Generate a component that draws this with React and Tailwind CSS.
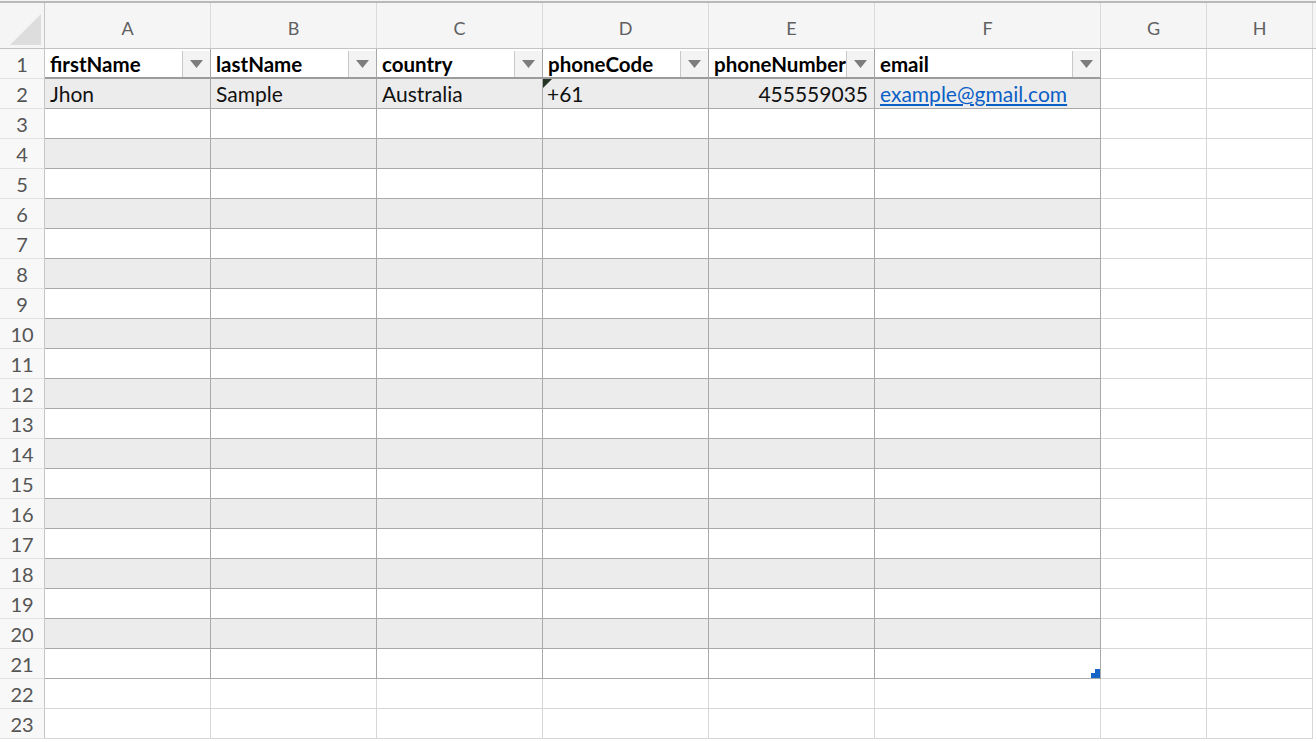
import React from "react";

const columns = [
  { letter: "A", width: "w-[166px]", key: "firstName" },
  { letter: "B", width: "w-[166px]", key: "lastName" },
  { letter: "C", width: "w-[166px]", key: "country" },
  { letter: "D", width: "w-[166px]", key: "phoneCode" },
  { letter: "E", width: "w-[166px]", key: "phoneNumber" },
  { letter: "F", width: "w-[226px]", key: "email" },
  { letter: "G", width: "w-[106px]", key: null },
  { letter: "H", width: "w-[106px]", key: null },
];

const record = {
  firstName: "Jhon",
  lastName: "Sample",
  country: "Australia",
  phoneCode: "+61",
  phoneNumber: "455559035",
  email: "example@gmail.com",
};

const TABLE_COLS = 6;
const TABLE_ROWS = 21;

function FilterButton() {
  return (
    <div className="absolute right-0 top-[2px] bottom-0 w-[28px] bg-[#f3f3f3] border-l border-[#c9c9c9] flex items-center justify-center">
      <svg width="13" height="8" viewBox="0 0 13 8">
        <path d="M0 0 H13 L6.5 8 Z" fill="#7d7d7d" />
      </svg>
    </div>
  );
}

function Cell({ col, colIndex, row }) {
  const inTable = colIndex < TABLE_COLS && row <= TABLE_ROWS;
  const banded = inTable && row > 1 && row % 2 === 0;
  const border = inTable ? "border-[#a9a9a9]" : "border-[#d6d6d6]";
  const bottom = row === 1 && inTable ? "border-b-2 border-b-[#9c9c9c]" : "border-b";

  let content = null;
  if (inTable && row === 1) {
    content = (
      <>
        <span className="font-bold text-black pl-[5px] pt-[2px] whitespace-nowrap text-[20.5px]">
          {col.key}
        </span>
        <FilterButton />
      </>
    );
  } else if (inTable && row === 2) {
    if (col.key === "phoneNumber") {
      content = (
        <span className="ml-auto pr-[6px] text-[#111]">{record.phoneNumber}</span>
      );
    } else if (col.key === "email") {
      content = (
        <span className="pl-[5px] text-[#0a5fc6] underline underline-offset-2">
          {record.email}
        </span>
      );
    } else if (col.key === "phoneCode") {
      content = (
        <>
          <svg className="absolute left-0 top-0" width="9" height="9" viewBox="0 0 9 9">
            <path d="M0 0 H9 L0 9 Z" fill="#263526" />
          </svg>
          <span className="pl-[4px] text-[#111]">{record.phoneCode}</span>
        </>
      );
    } else {
      content = <span className="pl-[5px] text-[#111]">{record[col.key]}</span>;
    }
  } else if (inTable && row === TABLE_ROWS && colIndex === TABLE_COLS - 1) {
    content = (
      <svg className="absolute right-0 bottom-0" width="9" height="9" viewBox="0 0 9 9">
        <path d="M4 0 H9 V9 H0 V4 H4 Z" fill="#1565c9" />
      </svg>
    );
  }

  return (
    <div
      className={`${col.width} h-[30px] shrink-0 relative flex items-center overflow-hidden border-r ${bottom} ${border} ${
        banded ? "bg-[#ececec]" : "bg-white"
      }`}
    >
      {content}
    </div>
  );
}

export default function App() {
  const rows = Array.from({ length: 23 }, (_, i) => i + 1);

  return (
    <div className="w-[1316px] h-[742px] overflow-hidden bg-white font-['Lato',sans-serif] text-[21px] leading-none">
      <div className="h-px bg-[#f4f4f4]" />
      <div className="h-[2px] bg-[#b9b9b9]" />

      <div className="flex h-[46px] bg-[#f5f5f5] border-b border-[#c3c3c3]">
        <div className="w-[45px] shrink-0 border-r border-[#c6c6c6] relative">
          <svg className="absolute left-[10px] top-[11px]" width="31" height="31" viewBox="0 0 31 31">
            <path d="M31 0 V31 H0 Z" fill="#dddddd" />
          </svg>
        </div>
        {columns.map((col) => (
          <div
            key={col.letter}
            className={`${col.width} shrink-0 flex items-center justify-center pt-1 border-r border-[#dadada] text-[#5f5f5f] text-[18px]`}
          >
            {col.letter}
          </div>
        ))}
      </div>

      {rows.map((row) => (
        <div key={row} className="flex">
          <div className="w-[45px] h-[30px] shrink-0 flex items-center justify-center bg-[#f8f8f8] border-r border-r-[#c6c6c6] border-b border-b-[#e2e2e2] text-[#555555] text-[20px]">
            {row}
          </div>
          {columns.map((col, i) => (
            <Cell key={col.letter} col={col} colIndex={i} row={row} />
          ))}
        </div>
      ))}
    </div>
  );
}
